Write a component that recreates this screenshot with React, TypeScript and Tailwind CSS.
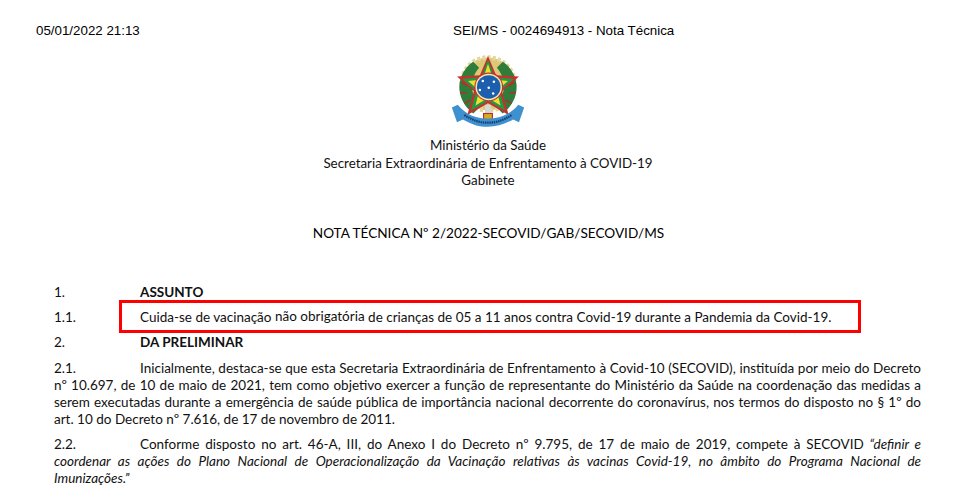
function Emblem() {
  return (
    <svg width="74" height="76" viewBox="0 0 100 103" className="block">
      <circle cx="50" cy="42" r="36" fill="#dcc878" stroke="#e6d69a" strokeWidth="6" strokeDasharray="4 3" />
      <path d="M30 12 C6 28 4 62 30 82 L40 72 C26 58 24 36 38 20 Z" fill="#2f7d3b" />
      <path d="M70 12 C94 28 96 62 70 82 L60 72 C74 58 76 36 62 20 Z" fill="#2f7d3b" />
      <path d="M14 40 l8 4 M12 54 l9 0 M18 68 l8 -4 M86 40 l-8 4 M88 54 l-9 0 M82 68 l-8 -4" stroke="#a9332b" strokeWidth="2" />
      <rect x="46" y="70" width="8" height="20" fill="#d3d9d9" />
      <polygon points="50,4 61,30 92,32 69,52 78,84 50,68 22,84 31,52 8,32 39,30" fill="#c9302c" />
      <polygon points="50,9 59,33 85,35 66,52 73,78 50,65 27,78 34,52 15,35 41,33" fill="#1f9a46" />
      <polygon points="50,15 57,36 77,38 62,51 67,71 50,61 33,71 38,51 23,38 43,36" fill="#f3dc2e" />
      <circle cx="51" cy="46" r="19.5" fill="#c9302c" />
      <circle cx="51" cy="46" r="18" fill="#f0e9b0" />
      <circle cx="51" cy="46" r="16" fill="#1c5fae" />
      <g fill="#ffffff">
        <circle cx="43" cy="38" r="1.7" />
        <circle cx="58" cy="39" r="1.7" />
        <circle cx="51" cy="47" r="1.7" />
        <circle cx="39" cy="50" r="1.7" />
        <circle cx="57" cy="55" r="1.7" />
      </g>
      <rect x="44" y="82" width="12" height="8" fill="#d9a925" stroke="#b3322c" strokeWidth="1.5" />
      <path d="M1 74 L9 70 C20 84 36 89 50 89 C64 89 80 84 91 70 L99 74 L92 94 L84 90 C72 97 62 100 50 100 C38 100 28 97 16 90 L8 94 Z" fill="#3f90cf" />
      <path d="M18 84 C30 92 40 94.500 50 94.500 C60 94.500 70 92 82 84" fill="none" stroke="#123f70" strokeWidth="3" strokeDasharray="2 1" />
    </svg>
  )
}

function Row({ num, children, className = '' }: { num: string; children: React.ReactNode; className?: string }) {
  return (
    <div className={`flex h-[17px] items-center ${className}`}>
      <span className="w-[86px] shrink-0">{num}</span>
      <span>{children}</span>
    </div>
  )
}

export default function App() {
  return (
    <div className="h-[497px] w-[973px] overflow-hidden bg-white text-black">
      <header className="mt-[22px] flex h-[17px] items-center pl-[36px] font-['Liberation_Sans',sans-serif] text-[13.33px]">
        <span className="w-[417px]">05/01/2022 21:13</span>
        <span>SEI/MS - 0024694913 - Nota Técnica</span>
      </header>

      <main className="font-['Lato',sans-serif]">
        <div className="mt-[14px] flex justify-center pl-[3px]">
          <Emblem />
        </div>

        <div className="mt-[8px] pl-[3px] text-center text-[13.36px] leading-[17.5px] text-[#111]">
          <p>Ministério da Saúde</p>
          <p>Secretaria Extraordinária de Enfrentamento à COVID-19</p>
          <p>Gabinete</p>
        </div>

        <h1 className="mt-[33px] h-[20px] pl-[4px] text-center text-[13.6px] leading-[20px] font-normal">
          NOTA TÉCNICA Nº 2/2022-SECOVID/GAB/SECOVID/MS
        </h1>

        <section className="mt-[41px] ml-[54px] w-[867px] text-[13.5px] leading-[17px] text-[#111]">
          <Row num="1."><b className="font-bold">ASSUNTO</b></Row>
          <div className="relative mt-[8px]">
            <Row num="1.1.">Cuida-se de vacinação <span className="align-[1px]">não obrigatória</span> de crianças de 05 a 11 anos contra Covid-19 durante a Pandemia da Covid-19.</Row>
            <div className="absolute left-[65px] top-[-9px] h-[33px] w-[742px] border-[3px] border-[#fe0000]" />
          </div>
          <Row num="2." className="mt-[8px]"><b className="font-bold">DA PRELIMINAR</b></Row>

          <p className="mt-[9px] text-justify">
            <span className="inline-block w-[86px]">2.1.</span>
            Inicialmente, destaca-se que esta Secretaria Extraordinária de Enfrentamento à Covid-10 (SECOVID), instituída por meio do Decreto nº 10.697, de 10 de maio de 2021, tem como objetivo exercer a função de representante do Ministério da Saúde na coordenação das medidas a serem executadas durante a emergência de saúde pública de importância nacional decorrente do coronavírus, nos termos do disposto no § 1º do art. 10 do Decreto nº 7.616, de 17 de novembro de 2011.
          </p>

          <div className="mt-[8px]">
            <p className="text-justify [text-align-last:justify]">
              <span className="inline-block w-[86px]">2.2.</span>
              Conforme disposto no art. 46-A, III, do Anexo I do Decreto nº 9.795, de 17 de maio de 2019, compete à SECOVID <i>“definir e coordenar as ações do Plano Nacional de Operacionalização da Vacinação relativas às vacinas Covid-19, no âmbito do Programa Nacional de</i>
            </p>
            <p><i>Imunizações.”</i></p>
          </div>
        </section>
      </main>
    </div>
  )
}
